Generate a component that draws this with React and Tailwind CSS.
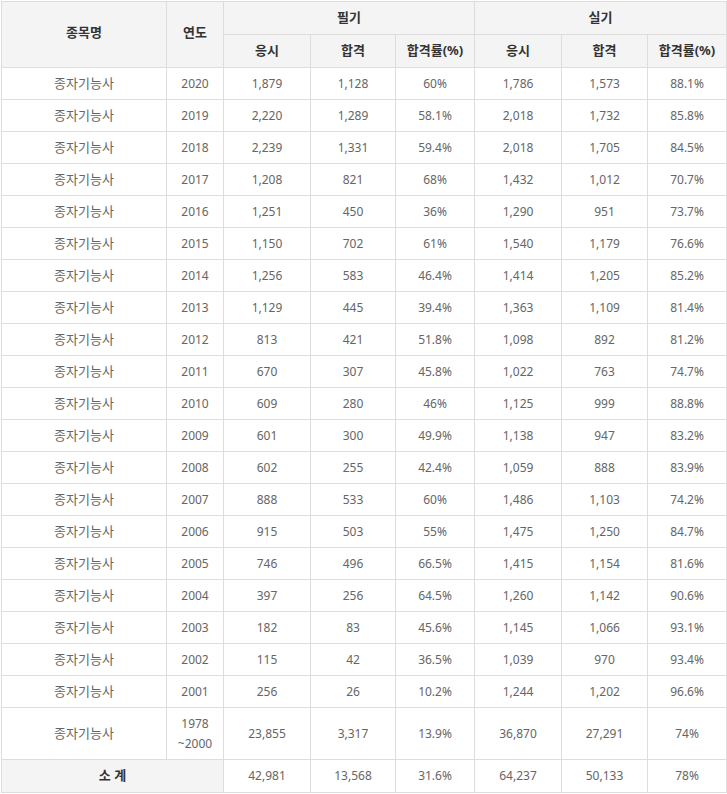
import React from 'react';

const rows = [
  ['2020', '1,879', '1,128', '60%', '1,786', '1,573', '88.1%'],
  ['2019', '2,220', '1,289', '58.1%', '2,018', '1,732', '85.8%'],
  ['2018', '2,239', '1,331', '59.4%', '2,018', '1,705', '84.5%'],
  ['2017', '1,208', '821', '68%', '1,432', '1,012', '70.7%'],
  ['2016', '1,251', '450', '36%', '1,290', '951', '73.7%'],
  ['2015', '1,150', '702', '61%', '1,540', '1,179', '76.6%'],
  ['2014', '1,256', '583', '46.4%', '1,414', '1,205', '85.2%'],
  ['2013', '1,129', '445', '39.4%', '1,363', '1,109', '81.4%'],
  ['2012', '813', '421', '51.8%', '1,098', '892', '81.2%'],
  ['2011', '670', '307', '45.8%', '1,022', '763', '74.7%'],
  ['2010', '609', '280', '46%', '1,125', '999', '88.8%'],
  ['2009', '601', '300', '49.9%', '1,138', '947', '83.2%'],
  ['2008', '602', '255', '42.4%', '1,059', '888', '83.9%'],
  ['2007', '888', '533', '60%', '1,486', '1,103', '74.2%'],
  ['2006', '915', '503', '55%', '1,475', '1,250', '84.7%'],
  ['2005', '746', '496', '66.5%', '1,415', '1,154', '81.6%'],
  ['2004', '397', '256', '64.5%', '1,260', '1,142', '90.6%'],
  ['2003', '182', '83', '45.6%', '1,145', '1,066', '93.1%'],
  ['2002', '115', '42', '36.5%', '1,039', '970', '93.4%'],
  ['2001', '256', '26', '10.2%', '1,244', '1,202', '96.6%'],
];

const total = ['42,981', '13,568', '31.6%', '64,237', '50,133', '78%'];

const th = 'border border-[#dddddd] bg-[#f4f4f4] text-[#333] font-bold text-[13px] text-center p-0';
const td = 'border border-[#dddddd] text-[#666] text-[12px] text-center p-0';
const tdName = 'border border-[#dddddd] text-[#666] text-[13px] text-center p-0';

const App = () => {
  return (
    <div className="p-px bg-white" style={{ fontFamily: '"Noto Sans", "Noto Sans CJK KR", sans-serif' }}>
      <table className="table-fixed border-collapse w-[725px]">
        <colgroup>
          <col className="w-[165px]" />
          <col className="w-[57px]" />
          <col className="w-[87px]" />
          <col className="w-[85px]" />
          <col className="w-[79px]" />
          <col className="w-[87px]" />
          <col className="w-[86px]" />
          <col className="w-[79px]" />
        </colgroup>
        <thead>
          <tr className="h-[33px]">
            <th rowSpan={2} className={`${th} pb-1`}>종목명</th>
            <th rowSpan={2} className={`${th} pb-1`}>연도</th>
            <th colSpan={3} className={th}>필기</th>
            <th colSpan={3} className={th}>실기</th>
          </tr>
          <tr className="h-[33px]">
            <th className={th}>응시</th>
            <th className={th}>합격</th>
            <th className={th}>합격률(%)</th>
            <th className={th}>응시</th>
            <th className={th}>합격</th>
            <th className={th}>합격률(%)</th>
          </tr>
        </thead>
        <tbody>
          {rows.map((r) => (
            <tr key={r[0]} className="h-[32px]">
              <td className={tdName}>종자기능사</td>
              {r.map((c, i) => (
                <td key={i} className={td}>{c}</td>
              ))}
            </tr>
          ))}
          <tr className="h-[52px]">
            <td className={tdName}>종자기능사</td>
            <td className={`${td} leading-[20px]`}>1978<br />~2000</td>
            <td className={td}>23,855</td>
            <td className={td}>3,317</td>
            <td className={td}>13.9%</td>
            <td className={td}>36,870</td>
            <td className={td}>27,291</td>
            <td className={td}>74%</td>
          </tr>
          <tr className="h-[33px]">
            <td colSpan={2} className={th}>소 계</td>
            {total.map((c, i) => (
              <td key={i} className={td}>{c}</td>
            ))}
          </tr>
        </tbody>
      </table>
    </div>
  );
};

export default App;
